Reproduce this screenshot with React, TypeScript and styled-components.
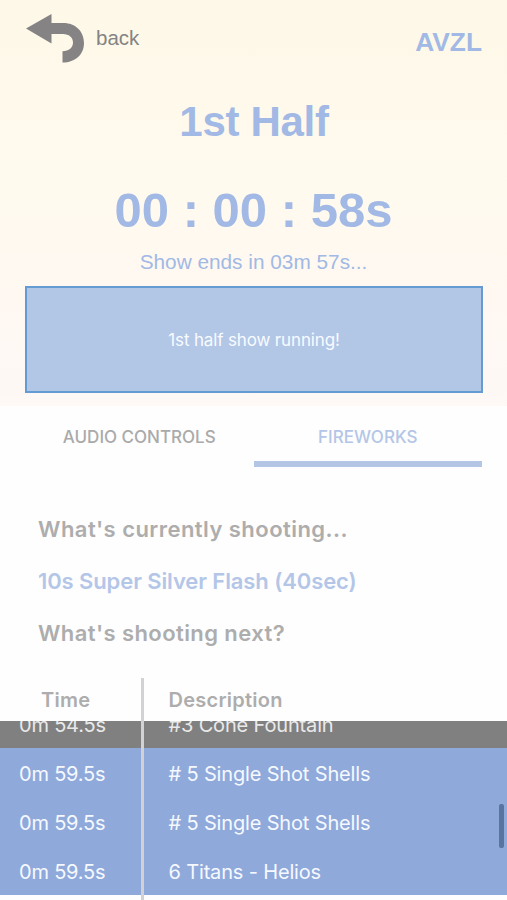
import React from "react";
import styled, { createGlobalStyle } from "styled-components";

const GlobalStyle = createGlobalStyle`
  * { box-sizing: border-box; }
  html, body { margin: 0; padding: 0; }
  body { background: #fff; font-family: Inter, "Liberation Sans", sans-serif; overflow: hidden; }
  h1, h2, h3, p { margin: 0; }
`;

const Screen = styled.div`
  width: 507px;
  height: 900px;
  display: flex;
  flex-direction: column;
  overflow: hidden;
  background: #fefefe;
`;

const Hero = styled.header`
  height: 406px;
  flex: none;
  display: flex;
  flex-direction: column;
  align-items: stretch;
  padding: 0 25px;
  background: linear-gradient(#fef8e8 0, #fffaee 45%, #fff8f2 75%, #fef8f6 100%);
  color: #a1b9e4;
  font-family: "Liberation Sans", Arial, sans-serif;
  text-align: center;
  white-space: nowrap;
`;

const TopBar = styled.div`
  height: 90px;
  display: flex;
  justify-content: space-between;
`;

const BackButton = styled.button`
  display: flex;
  align-items: flex-start;
  padding: 0;
  border: 0;
  background: none;
  color: #858384;
  font: 20.5px/24px "Liberation Sans", Arial, sans-serif;
  span { margin: 26px 0 0 11px; }
  svg { margin-top: 13px; }
`;

const Brand = styled.div`
  font-size: 26.3px;
  line-height: 30px;
  font-weight: 700;
  margin-top: 27px;
`;

const Title = styled.h1`
  font-size: 42px;
  line-height: 48px;
  letter-spacing: -0.3px;
  padding-left: 1px;
  margin-top: 8px;
`;

const Timer = styled.div`
  font-size: 49px;
  line-height: 56px;
  font-weight: 700;
  margin-top: 36px;
`;

const Remaining = styled.p`
  font-size: 20.8px;
  line-height: 24px;
  margin-top: 12px;
`;

const Status = styled.div`
  width: 458px;
  height: 107px;
  margin-top: 12px;
  display: flex;
  align-items: center;
  justify-content: center;
  border: 2px solid #639bd2;
  background: #b2c6e6;
  color: #f8fbff;
  font: 17px/22px Inter, sans-serif;
  letter-spacing: -0.15px;
`;

const Tabs = styled.nav`
  height: 61px;
  flex: none;
  display: grid;
  grid-template-columns: 1fr 1fr;
  padding: 0 25px;
`;

const Tab = styled.button<{ $active?: boolean }>`
  border: 0;
  border-bottom: 6px solid ${(p) => (p.$active ? "#b3c6e6" : "transparent")};
  background: none;
  padding: 6px 0 0;
  color: ${(p) => (p.$active ? "#b4c6e7" : "#aaa")};
  font: 500 17px/22px Inter, sans-serif;
  letter-spacing: 0;
`;

const Shooting = styled.section`
  height: 211px;
  flex: none;
  padding: 47px 38px 0;
  display: flex;
  flex-direction: column;
  gap: 22px;
`;

const Line = styled.h2<{ $accent?: boolean; $spacing: string }>`
  font-size: 22px;
  line-height: 30px;
  font-weight: 600;
  white-space: nowrap;
  letter-spacing: ${(p) => p.$spacing};
  color: ${(p) => (p.$accent ? "#b4c6e8" : "#adadad")};
`;

const Table = styled.section`
  flex: 1;
  min-height: 0;
  display: flex;
  flex-direction: column;
  position: relative;
`;

const Columns = styled.div`
  display: grid;
  grid-template-columns: 144px 1fr;
  align-items: center;
`;

const HeaderRow = styled(Columns)`
  height: 43px;
  flex: none;
  color: #adadad;
  font-size: 20px;
  font-weight: 600;
  letter-spacing: 0.25px;
`;

const HeaderCell = styled.div<{ $inset: number }>`
  padding-left: ${(p) => p.$inset}px;
`;

const Rows = styled.div`
  height: 174px;
  overflow: hidden;
  display: flex;
  flex-direction: column;
  justify-content: flex-end;
`;

const Row = styled(Columns)<{ $fired?: boolean }>`
  height: 49px;
  flex: none;
  background: ${(p) => (p.$fired ? "#808080" : "#90a9db")};
  color: ${(p) => (p.$fired ? "#e9e9e9" : "#f5f9ff")};
  padding-top: 2px;
  font-size: 20px;
  line-height: 28px;
  white-space: nowrap;
`;

const Time = styled.div`
  padding-left: 19px;
  letter-spacing: -0.2px;
`;

const Description = styled.div`
  padding-left: 24.5px;
  letter-spacing: -0.16px;
`;

const Divider = styled.div`
  position: absolute;
  left: 141px;
  top: 0;
  bottom: 0;
  width: 3px;
  background: #d2d2d5;
`;

const ScrollThumb = styled.div`
  position: absolute;
  right: 3px;
  top: 126px;
  width: 5px;
  height: 44px;
  border-radius: 2px;
  background: #59749f;
`;

const cues = [
  { time: "0m 54.5s", text: "#3 Cone Fountain", fired: true },
  { time: "0m 59.5s", text: "# 5 Single Shot Shells" },
  { time: "0m 59.5s", text: "# 5 Single Shot Shells" },
  { time: "0m 59.5s", text: "6 Titans - Helios" },
];

const BackArrow = () => (
  <svg width="60" height="51" viewBox="0 0 60 51" aria-hidden="true">
    <path
      fill="#858384"
      d="M1 15.500 26.500 1V10H38.500C50.500 10 59 18.500 59 30S50.500 49.500 37.500 49.500V38.200C44 38.200 48 34.500 48 29.500S44 21 38 21H26.500V30.500Z"
    />
  </svg>
);

export default function App() {
  return (
    <>
      <GlobalStyle />
      <Screen>
        <Hero>
          <TopBar>
            <BackButton>
              <BackArrow />
              <span>back</span>
            </BackButton>
            <Brand>AVZL</Brand>
          </TopBar>
          <Title>1st Half</Title>
          <Timer>00 : 00 : 58s</Timer>
          <Remaining>Show ends in 03m 57s...</Remaining>
          <Status>1st half show running!</Status>
        </Hero>
        <Tabs>
          <Tab>AUDIO CONTROLS</Tab>
          <Tab $active>FIREWORKS</Tab>
        </Tabs>
        <Shooting>
          <Line $spacing="0.45px">What's currently shooting...</Line>
          <Line $accent $spacing="-0.1px">10s Super Silver Flash (40sec)</Line>
          <Line $spacing="0.42px">What's shooting next?</Line>
        </Shooting>
        <Table>
          <HeaderRow>
            <HeaderCell $inset={41}>Time</HeaderCell>
            <HeaderCell $inset={24.5}>Description</HeaderCell>
          </HeaderRow>
          <Rows>
            {cues.map((cue, i) => (
              <Row key={i} $fired={cue.fired}>
                <Time>{cue.time}</Time>
                <Description>{cue.text}</Description>
              </Row>
            ))}
          </Rows>
          <Divider />
          <ScrollThumb />
        </Table>
      </Screen>
    </>
  );
}
